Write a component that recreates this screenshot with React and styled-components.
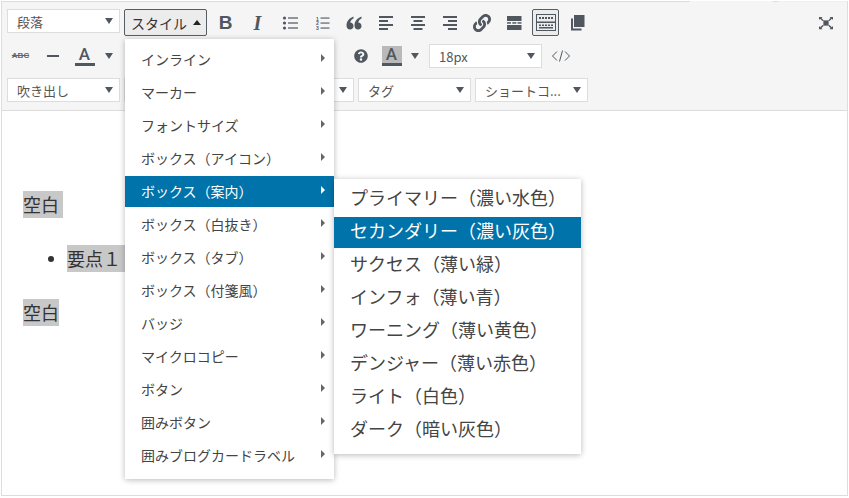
import React from "react";
import styled, { createGlobalStyle } from "styled-components";
import { FaLink, FaQuestionCircle } from "react-icons/fa";

const ICON = "#50575e";
const JP = `"Noto Sans CJK JP", "Noto Sans", sans-serif`;

const Global = createGlobalStyle`
  html, body { margin: 0; padding: 0; background: #fff; overflow: hidden; }
  body { font-family: ${JP}; }
`;

const Page = styled.div`
  position: relative;
  width: 849px;
  height: 498px;
  box-sizing: border-box;
  padding: 1px 1px 2px 1px;
  overflow: hidden;
`;
const Frame = styled.div`
  position: relative;
  height: 100%;
  box-sizing: border-box;
  border: 1px solid #ddd;
  display: flex;
  flex-direction: column;
`;
const TabNotch = styled.div`
  position: absolute;
  left: 688px;
  top: -1px;
  width: 157px;
  height: 1px;
  background: linear-gradient(to right, #f5f5f5 83px, #ddd 83px, #ddd 88px, #f0f0f0 88px);
`;
const Toolbar = styled.div`
  background: #f5f5f5;
  border-bottom: 1px solid #ddd;
  height: 109px;
  flex: none;
  box-sizing: border-box;
  padding: 7px 0 0 5px;
  display: flex;
  flex-direction: column;
`;
const Row = styled.div`
  display: flex;
  align-items: ${p => (p.$top ? "flex-start" : "center")};
  gap: ${p => p.$gap || 5}px;
  height: ${p => p.$h}px;
  margin-bottom: ${p => p.$mb || 0}px;
`;
const Select = styled.div`
  width: 113px;
  height: 24px;
  flex: none;
  box-sizing: border-box;
  background: #fff;
  border: 1px solid #ddd;
  display: flex;
  align-items: center;
  padding: 0 6px 0 9px;
  font-size: 13px;
  color: #555;
  margin-left: ${p => p.$ml || 0}px;
`;
const SelectText = styled.span`
  flex: 1;
  white-space: nowrap;
  overflow: hidden;
`;
const Caret = styled.i`
  display: block;
  flex: none;
  width: 0;
  height: 0;
  border-left: 4px solid transparent;
  border-right: 4px solid transparent;
  border-top: 6px solid ${ICON};
`;
const StyleButton = styled.div`
  width: 83px;
  height: 27px;
  flex: none;
  box-sizing: border-box;
  margin-left: -1px;
  border: 1px solid #555d66;
  border-radius: 2px;
  background: #ececec;
  display: flex;
  align-items: center;
  padding-left: 6px;
  font-size: 14px;
  color: #333;
`;
const CaretUp = styled.i`
  display: block;
  width: 0;
  height: 0;
  margin-left: 6px;
  border-left: 4px solid transparent;
  border-right: 4px solid transparent;
  border-bottom: 5px solid #222;
`;
const IconButton = styled.div`
  width: 27px;
  height: 27px;
  flex: none;
  box-sizing: border-box;
  display: flex;
  align-items: center;
  justify-content: center;
  color: ${ICON};
  border: 1px solid ${p => (p.$active ? "#555d66" : "transparent")};
  border-radius: 2px;
  background: ${p => (p.$active ? "#ececec" : "transparent")};
  margin-left: ${p => (p.$auto ? "auto" : `${p.$ml || 0}px`)};
  margin-right: ${p => p.$mr || 0}px;
`;
const BoldGlyph = styled.span`
  font: bold 19px/1 "Liberation Sans", sans-serif;
`;
const ItalicGlyph = styled.span`
  font: italic bold 20px/1 "Liberation Serif", serif;
`;
const Strike = styled.span`
  font: bold 8px/1 "Liberation Sans", sans-serif;
  text-decoration: line-through;
  color: #666;
`;
const Dash = styled.i`
  display: block;
  width: 12px;
  height: 2px;
  background: ${ICON};
`;
const ColorA = styled.span`
  width: 20px;
  height: 20px;
  box-sizing: border-box;
  display: block;
  text-align: center;
  font: 500 17px/16px "Roboto", sans-serif;
  color: ${ICON};
  border-bottom: 3px solid ${ICON};
  background: ${p => p.$bg || "transparent"};
`;
const CaretBox = styled.div`
  width: 12px;
  flex: none;
  display: flex;
  justify-content: center;
  margin-left: ${p => p.$ml || 0}px;
`;
const Spacer = styled.div`
  width: ${p => p.$w}px;
  flex: none;
  display: flex;
  justify-content: flex-end;
  padding-right: 11px;
  box-sizing: border-box;
`;
const Tick = styled.i`
  display: block;
  width: 1px;
  height: 3px;
  margin-top: -7px;
  background: #bdbdbd;
`;
const Editor = styled.div`
  flex: 1;
  background: #fff;
  padding: 80px 0 0 21px;
  font-size: 18px;
  color: #333;
`;
const Para = styled.div`
  height: 27px;
  margin-bottom: 27px;
`;
const ListLine = styled.div`
  height: 27px;
  margin-bottom: 27px;
  padding-left: 44px;
  position: relative;
  &::before {
    content: "";
    position: absolute;
    left: 25px;
    top: 11px;
    width: 6px;
    height: 6px;
    border-radius: 50%;
    background: #333;
  }
`;
const Mark = styled.span`
  display: inline-block;
  height: 27px;
  line-height: 26px;
  background: #c8c8c8;
  white-space: pre;
`;
const Menu = styled.div`
  position: absolute;
  background: #fff;
  box-sizing: border-box;
  box-shadow: 0 1px 6px rgba(0, 0, 0, 0.28);
  padding: 5px 0 8px;
  left: ${p => p.$l}px;
  top: ${p => p.$t}px;
  width: ${p => p.$w}px;
`;
const Item = styled.div`
  height: 31px;
  box-sizing: border-box;
  margin-bottom: 2px;
  &:last-child { margin-bottom: 0; }
  display: flex;
  align-items: center;
  padding: 0 9px ${p => p.$pb}px 16px;
  font-size: ${p => p.$fs}px;
  white-space: nowrap;
  color: ${p => (p.$on ? "#fff" : "#444")};
  background: ${p => (p.$on ? "#0073aa" : "transparent")};
`;
const ItemLabel = styled.span`
  flex: 1;
`;
const Arrow = styled.i`
  display: block;
  width: 0;
  height: 0;
  border-top: 4px solid transparent;
  border-bottom: 4px solid transparent;
  border-left: 4px solid ${p => (p.$on ? "#fff" : "#666")};
  margin-top: -2px;
`;

const Svg = ({ children, w = 20, h = 20, vb = "0 0 20 20" }) => (
  <svg width={w} height={h} viewBox={vb} fill="currentColor">{children}</svg>
);
const Lines = ({ rows }) => (
  <Svg>
    {rows.map((r, i) => (
      <rect key={i} x={r[0]} y={r[1]} width={r[2]} height={r[3] || 2} />
    ))}
  </Svg>
);

const UL = () => (
  <Svg>
    <circle cx="4.5" cy="5" r="1.6" />
    <circle cx="4.5" cy="10" r="1.6" />
    <circle cx="4.5" cy="15" r="1.6" />
    <rect x="8" y="4.400" width="10" height="1.200" />
    <rect x="8" y="9.400" width="10" height="1.200" />
    <rect x="8" y="14.400" width="10" height="1.200" />
  </Svg>
);
const OL = () => (
  <Svg>
    <text x="4" y="7.500" fontSize="5" fontWeight="bold" fontFamily="Liberation Sans">1</text>
    <text x="4" y="12" fontSize="5" fontWeight="bold" fontFamily="Liberation Sans">2</text>
    <text x="4" y="16.500" fontSize="5" fontWeight="bold" fontFamily="Liberation Sans">3</text>
    <rect x="8.500" y="4.500" width="9" height="1.100" />
    <rect x="8.500" y="9.500" width="9" height="1.100" />
    <rect x="8.500" y="14.500" width="9" height="1.100" />
  </Svg>
);
const Quote = () => (
  <Svg>
    <path d="M9.500 3.500C5.500 5 2.500 8 2.500 12.500 2.500 15 4 16.500 6 16.500 8 16.500 9.500 15 9.500 13 9.500 11 8 9.500 6.200 9.500 6.400 8 7.600 6.500 9.500 5.500z" />
    <path d="M17.500 3.500C13.500 5 10.500 8 10.500 12.500 10.500 15 12 16.500 14 16.500 16 16.500 17.500 15 17.500 13 17.500 11 16 9.500 14.200 9.500 14.400 8 15.600 6.500 17.500 5.500z" />
  </Svg>
);
const ALeft = () => <Lines rows={[[3, 3, 14], [3, 7, 9], [3, 11, 14], [3, 15, 9]]} />;
const ACenter = () => <Lines rows={[[3, 3, 14], [5.500, 7, 9], [3, 11, 14], [5.500, 15, 9]]} />;
const ARight = () => <Lines rows={[[3, 3, 14], [8, 7, 9], [3, 11, 14], [8, 15, 9]]} />;
const More = () => (
  <Svg>
    <rect x="3" y="3" width="14.500" height="5" />
    <rect x="3" y="9.200" width="4" height="1.500" />
    <rect x="8.300" y="9.200" width="4" height="1.500" />
    <rect x="13.500" y="9.200" width="4" height="1.500" />
    <rect x="3" y="12" width="14.500" height="5" />
  </Svg>
);
const Keyboard = () => (
  <svg width="22" height="20" viewBox="0 0 22 20" fill="currentColor">
    <path fillRule="evenodd" d="M1 1h20v17H1zM2 2v6.500h18V2zM2 10v7h18v-7z" />
    {[4, 7, 10, 13, 16].map(x => <rect key={x} x={x} y="4" width="2" height="2" />)}
    {[4, 7, 10, 13, 16].map(x => <rect key={x} x={x} y="11.500" width="2" height="1.500" />)}
    <rect x="4" y="14" width="14" height="1.500" />
  </svg>
);
const Copy = () => (
  <Svg>
    <rect x="6" y="2" width="10.500" height="12" />
    <path d="M3 5.500h2v10h8.500v2H3z" />
  </Svg>
);
const Fullscreen = () => (
  <svg width="16" height="14" viewBox="0 0 18 16" fill="currentColor">
    <rect x="6" y="5" width="6" height="6" />
    <path d="M1 1h4L3.800 2.200 6.500 5 5 5.700 2.300 3.200 1 4.500z" />
    <path d="M17 1h-4l1.200 1.200L11.500 5l1.500.7 2.700-2.500L17 4.500z" />
    <path d="M1 15h4l-1.200-1.200L6.500 11 5 10.300 2.300 12.800 1 11.500z" />
    <path d="M17 15h-4l1.200-1.200L11.500 11l1.500-.7 2.700 2.500 1.300-1.300z" />
  </svg>
);
const Code = () => (
  <svg width="20" height="16" viewBox="0 0 20 16" fill="none" stroke="currentColor" strokeWidth="1">
    <path d="M6 3.500 1.500 8 6 12.500M14 3.500 18.500 8 14 12.500M11.500 2.500 8.500 13.500" />
  </svg>
);

const mainItems = [
  "インライン", "マーカー", "フォントサイズ", "ボックス（アイコン）", "ボックス（案内）",
  "ボックス（白抜き）", "ボックス（タブ）", "ボックス（付箋風）", "バッジ", "マイクロコピー",
  "ボタン", "囲みボタン", "囲みブログカードラベル",
];
const subItems = [
  "プライマリー（濃い水色）", "セカンダリー（濃い灰色）", "サクセス（薄い緑）", "インフォ（薄い青）",
  "ワーニング（薄い黄色）", "デンジャー（薄い赤色）", "ライト（白色）", "ダーク（暗い灰色）",
];

export default function App() {
  return (
    <Page>
      <Global />
      <Frame>
        <TabNotch />
        <Toolbar>
          <Row $h={27} $mb={7} $top>
            <Select><SelectText>段落</SelectText><Caret /></Select>
            <StyleButton>スタイル<CaretUp /></StyleButton>
            <IconButton><BoldGlyph>B</BoldGlyph></IconButton>
            <IconButton><ItalicGlyph>I</ItalicGlyph></IconButton>
            <IconButton><UL /></IconButton>
            <IconButton><OL /></IconButton>
            <IconButton><Quote /></IconButton>
            <IconButton><ALeft /></IconButton>
            <IconButton><ACenter /></IconButton>
            <IconButton><ARight /></IconButton>
            <IconButton><FaLink size={18} /></IconButton>
            <IconButton><More /></IconButton>
            <IconButton $active><Keyboard /></IconButton>
            <IconButton><Copy /></IconButton>
            <IconButton $auto $mr={8}><Fullscreen /></IconButton>
          </Row>
          <Row $h={26} $mb={9}>
            <IconButton><Strike>ABC</Strike></IconButton>
            <IconButton><Dash /></IconButton>
            <IconButton><ColorA>A</ColorA></IconButton>
            <CaretBox><Caret /></CaretBox>
            <Spacer $w={222}><Tick /></Spacer>
            <IconButton><FaQuestionCircle size={14} /></IconButton>
            <IconButton $ml={-1}><ColorA $bg="#b9b9b9">A</ColorA></IconButton>
            <CaretBox $ml={-1}><Caret /></CaretBox>
            <Select $ml={3}><SelectText>18px</SelectText><Caret /></Select>
            <IconButton><Code /></IconButton>
          </Row>
          <Row $h={24} $gap={4}>
            <Select><SelectText>吹き出し</SelectText><Caret /></Select>
            <Select><SelectText /><Caret /></Select>
            <Select><SelectText /><Caret /></Select>
            <Select><SelectText>タグ</SelectText><Caret /></Select>
            <Select><SelectText>ショートコ...</SelectText><Caret /></Select>
          </Row>
        </Toolbar>
        <Editor>
          <Para><Mark>空白 </Mark></Para>
          <ListLine><Mark>要点１ </Mark></ListLine>
          <Para><Mark>空白</Mark></Para>
        </Editor>
        <Menu $l={123} $t={37} $w={209}>
          {mainItems.map((t, i) => (
            <Item key={t} $fs={14} $pb={2} $on={i === 4}>
              <ItemLabel>{t}</ItemLabel>
              <Arrow $on={i === 4} />
            </Item>
          ))}
        </Menu>
        <Menu $l={332} $t={177} $w={247}>
          {subItems.map((t, i) => (
            <Item key={t} $fs={18} $pb={5} $on={i === 1}>{t}</Item>
          ))}
        </Menu>
      </Frame>
    </Page>
  );
}
